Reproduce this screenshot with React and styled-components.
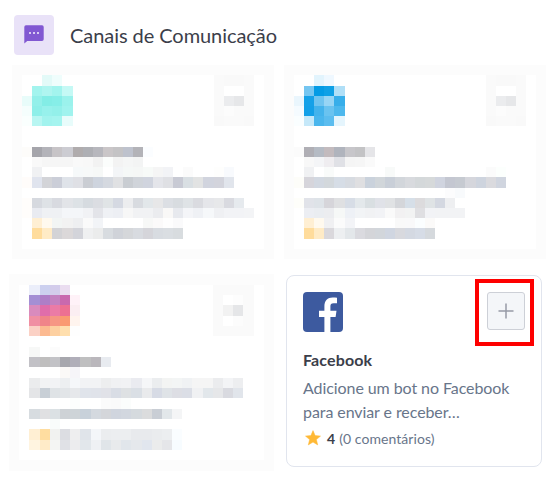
import React from "react";
import styled, { createGlobalStyle } from "styled-components";

const GlobalStyle = createGlobalStyle`
  *, *::before, *::after { box-sizing: border-box; }
  body {
    margin: 0;
    background: #fff;
    font-family: Lato, "Liberation Sans", sans-serif;
  }
`;

const Page = styled.main`
  width: 553px;
  height: 490px;
  overflow: hidden;
  background: #fff;
`;

const Header = styled.header`
  display: flex;
  align-items: center;
  gap: 16px;
  padding: 15px 14px 10px;
`;

const HeaderIcon = styled.div`
  display: grid;
  place-items: center;
  width: 40px;
  height: 40px;
  border-radius: 4px;
  background: #e9e2f8;
`;

const Title = styled.h1`
  margin: 0;
  font-size: 20px;
  font-weight: 400;
  letter-spacing: -0.06px;
  line-height: 40px;
  color: #3b3e4a;
`;

const CardRow = styled.div`
  display: flex;
  align-items: flex-start;
  gap: ${(p) => p.$gap}px;
  padding-left: ${(p) => p.$indent}px;
  margin-bottom: 15px;
`;

const MosaicCard = styled.div`
  display: grid;
  flex: none;
  grid-template-columns: ${(p) => p.$columns};
  grid-template-rows: ${(p) => p.$rows};
  background: #fcfcfc;
`;

const MosaicBody = styled.div`
  grid-area: 2 / 2 / -2 / -2;
  background: #fff;
`;

const MosaicCell = styled.span.attrs((p) => ({
  style: { gridColumn: p.$col + 1, gridRow: p.$row + 1, background: `#${p.$tone}` },
}))``;

const Card = styled.article`
  flex: none;
  width: 256px;
  height: 192px;
  margin-top: 1px;
  padding: 16px;
  border: 1px solid #e1e5ee;
  border-radius: 8px;
  background: #fff;
`;

const CardTop = styled.div`
  display: flex;
  justify-content: space-between;
  align-items: flex-start;
  height: 40px;
`;

const AddSlot = styled.div`
  position: relative;
  width: 38px;
  height: 38px;
`;

const AddButton = styled.button`
  display: grid;
  place-items: center;
  width: 38px;
  height: 38px;
  padding: 0;
  border: 1px solid #cdd0d7;
  border-radius: 3px;
  background: #f4f6f9;
`;

const Highlight = styled.div`
  position: absolute;
  top: -13px;
  left: -12px;
  width: 59px;
  height: 67px;
  border: 4px solid #fe0000;
  pointer-events: none;
`;

const CardName = styled.h2`
  margin: 16px 0 0;
  font-size: 16px;
  font-weight: 700;
  letter-spacing: 0.12px;
  line-height: 24px;
  color: #3b3e4a;
`;

const Description = styled.p`
  margin: 4px 0 0;
  font-size: 16px;
  letter-spacing: -0.08px;
  line-height: 24px;
  color: #68758a;
`;

const Rating = styled.div`
  display: flex;
  align-items: center;
  height: 24px;
  margin-top: 2px;
  padding-left: 2px;
  font-size: 14px;
  letter-spacing: 0.06px;
  color: #68758a;
`;

const Score = styled.strong`
  margin: 0 4px 0 6px;
  font-weight: 700;
  color: #3b3e4a;
`;

const PLAIN_ROWS = "10px 11px repeat(5, 10px) 11px repeat(3, 10px) 11px repeat(4, 10px) 11px 10px 10px";

/* Each strip is [row, first column, tones from left to right]. */
const ADD_BLOCK = [
  [1, 20, "fafafa f9f9f9 f9f9f9 fafafa"],
  [2, 20, "fafafa ffffff ffffff fafafa"],
  [3, 20, "fafafa ebecee e6e7e9 fafafa"],
  [4, 20, "fafafa fcfcfc fafafa fafafa"],
  [5, 20, "f9f9f9 fafafa fafafa f9f9f9"],
];

const TEAL = {
  columns: "repeat(5, 10px) 11px repeat(13, 10px) 11px repeat(6, 10px)",
  rows: PLAIN_ROWS,
  strips: [
    ...ADD_BLOCK,
    [1, 3, "e3faf8 effdfc"],
    [2, 2, "a3f4ee aff5f0 a3f4ee c5f9f5"],
    [3, 1, "e8fcfa 93f0ea 83ede6 86eee8 9bf2ec"],
    [4, 1, "f5fefd 8eefe9 97f1ec 93f0ea a0f3ee"],
    [5, 1, "fafffe b8f6f2 a2f3ee a5f4ef e8fcfb"],
    [8, 1, "fdfcfa a5a5ab b3b3b9 c7c4c7 ccccd2 b0acad aeafb4 b7b7bd cac6c8 c4c3c5 bec2cd b3b3b8 fbfdff"],
    [9, 2, "f9f9f9 f6f6f6 f6f6f6 f6f6f6 f9f9f9 f8f8f8 f2f2f2 fbfdfc f3f3f3 f5f6f6 f3f4f4"],
    [10, 2, "f0f1f3 ffffff ffffff ffffff f6f9fa f7f9f9 f6f8f7 ffffff f3f5f7 f5f8f7 f5f7f6 f7faf8 f5f5f5 f2f3f6 ffffff fbfbfb ffffff ffffff fefefd f8fafd"],
    [11, 1, "fffcfa e0e4ee d3d4d8 cbced8 dfe3e9 dfe0e5 cacdd3 ced4de d5d9e0 e0e1e3 c9cdd2 d0d4da d0d4de e4e5ea dfe0e4 c8cad4 d9dfe3 e2e3e3 d1d4de d3d4dc e1e5ec"],
    [13, 1, "fffdfb d6d9df dee2e6 d8dae0 e2e4e8 dde2e6 d6dbe0 dbdde2 e0e4e6 d5d9e2 ecedef d8dbe0 e2e7ea e7e7e8 dcdfe4 d8dce0 dfe3e6 dadbe0 e5e6ea e7e8ea d9dae0 e6eaee"],
    [14, 1, "fffdfb e9ebf1 eff1f4 eff1f4 f4f6f9 f4f6f9 f1f2f5 e3e4e9 eff1f5 edeff4 f7f7f7 f1f2f4 f1f2f4 ebecef f9f8f7 e7e9ee f4f5f8 eff1f5 f6f8fa eff0f3 f2f3f6 f2f3f6 f3f4f6"],
    [15, 2, "ffefd3 fff9ee f2f5f4 f2f2f2 eeeff1 fafafa f2f4f7 ffffff ffffff ffffff ffffff f7f8f7 fbfafa fefefe fafafb"],
    [16, 2, "ffdc9c ffebc6 d3d3d6 dbd8d9 d3d4da eff0f1 ebecec d8dce0 d0d3d9 d5d7da d8dbe0 d5d5da d8dce1 dadee2 d8dcdf"],
  ],
};

const BLUE = {
  columns: "repeat(5, 10px) 11px repeat(12, 10px) 11px repeat(7, 10px)",
  rows: PLAIN_ROWS,
  strips: [
    ...ADD_BLOCK,
    [1, 3, "e2f4fd eff8ff"],
    [2, 2, "75c6f1 039be5 0ea0e6 b0dff7"],
    [3, 1, "eaf6fd 15a1e8 6fc4f0 97d5f5 37aeea"],
    [4, 1, "f5fbff 13a0e8 43b3ec 6ac3f0 4db8ed"],
    [5, 1, "fafeff c5e8f9 4ab6ed 5cbdef e5f5fd"],
    [8, 1, "fbfbfb b0afb5 b5bbc4 c3bbbe b0b4bd c7c6ca c3c3c5 e5e5e8"],
    [9, 2, "f8f8f8 f4f5f7 efedf0 e0e1e6 f5f5f5 f6f6f6 fafafa"],
    [10, 2, "f0f1f3 ffffff f9fbfa"],
    [10, 10, "f8faf9"],
    [10, 20, "fbfbfb fcfffd"],
    [11, 1, "fdfdf9 d6d5db d2d8e1 d3d8dc d6dde6 d7dbe1 dfdfe1 cad2dc d1d6da c9cfd8 d2d6db d8dade d4d8da d6d9da d0d4df c4c7d1 c6cad1 d5d6dc ced4de dadade d0d5df"],
    [12, 16, "fcfcfd f8fafc"],
    [13, 1, "fefefa e1e3e9 dee3e8 d6d5da dfe0e2 d7dde6 e3e8eb d9dfe2 e0e2e8 e0e2e4 d4d6da d6dfe8 dcdbdd dfe3e5 d4d8e1 eeeff1"],
    [14, 2, "eceef3 eaedf1 ecedf0 f6f8f7 eef1f6 f2f4f6 f1f2f4 f2f3f6 fafafa f2f1f2 f2f3f3 dfdfe2 f2f3f6 f2f3f5 f2f3f5 f2f3f5"],
    [15, 2, "ffefd3 fff9ee f0f0f2 fbfbfb f3f4f7"],
    [15, 11, "f9f9f9 f9f9fa fbfeff fbfaf9"],
    [16, 2, "ffdc9c ffebc6 dad8dc edeff1 e3e7ea dadadf d4d5d9 d2d6db d0d6e1 d8d9de d4d9e2 d6dce6 d5d9dd"],
  ],
};

const PINK = {
  columns:
    "10px 10px 11px repeat(4, 10px) 11px repeat(4, 10px) 11px repeat(5, 10px) 11px repeat(4, 10px) 11px 10px 10px",
  rows: "11px 10px 10px 11px 10px 10px 11px 10px 10px 11px 10px 10px 11px 10px 10px 11px 10px 10px 11px",
  strips: [
    [1, 20, "fafafa fafafa fafafa fafafa"],
    [2, 20, "fafafa ffffff fdfdfd fafafa"],
    [3, 20, "fafafa f2f2f2 e5e6e8 fafafa"],
    [4, 20, "fafafa ffffff fcfcfc fafafa"],
    [5, 20, "fafafa fafafa fafafa fafafa"],
    [1, 2, "ebeefa ccd0ef d3cceb eaddf0"],
    [2, 2, "a48fd4 ae7ec7 c381c0 c969ae fff2f8"],
    [3, 2, "d98bbd e06daa eb7ba6 ed7092 fbeef2"],
    [4, 2, "f08fa3 f08489 f69684 fa9a71 fff4ee"],
    [5, 2, "fbd1c5 fcba91 fdd0a1 ffdfae fefefe"],
    [7, 2, "f7f8f7 ffffff fcfcfc"],
    [8, 2, "c2c1c6 bfbebe c2c2c6 a7a7ad b0aeb9 bfbfc0 bab7bc e8ebf0"],
    [9, 5, "fbf9f7 f6f5f9"],
    [10, 2, "ebeced f2f3f4 f2f3f5 edeff1 f5f7fa f2f3f5 f2f3f5 edeeef f0f1f3 f1f2f4 eaebf0 f5f6f8 ebedef f3f4f3 f3f5f5 f0f2f4 f5f5f5 f5f5f5 ebecee f3f4f6 edeef0"],
    [11, 2, "e4e5e7 c8cfd6 dfe3e6 e2e5e8 e6e8eb e0e4eb e0e3ea e1e2e8 d9dde5 dee1e3 dadfe5 e9eaec d7dbe5 dfe3e7 dddee4 dbdee6 f0f1f3 e2e7eb e6e7e9 d9dae0 e1e5eb"],
    [12, 6, "fcfefd ffffff ffffff fbfbfb fafafa fbfdfc"],
    [13, 2, "d7dce0 e0e0e2 dbe1e4 ced2d6 ced4d8 c8d1da d4d9df d4d6da d0d5de d2d7df d5dade dbdcdd c9ced5 e2e7ea f4f5f6"],
    [14, 4, "f9fcfb"],
    [15, 2, "ffefd3 ffdda0 f1f2f0 dcdde2 eeeeef e0e4ea f4f6f9 ebedef eceef0 eceef0 e8eaed e8eaed eaecee eceef0 fafdff"],
    [16, 2, "fff4e0 ffebc8 f4f5f3 e0e1e6 ececee e2e7eb eff1f4 e0e5e9 e8eaec e1e6eb e5e8ec e1e6ee ebecec e5e6e9 f7fcff"],
  ],
};

function Mosaic({ data }) {
  return (
    <MosaicCard $columns={data.columns} $rows={data.rows}>
      <MosaicBody />
      {data.strips.flatMap(([row, start, tones]) =>
        tones.split(" ").map((tone, i) => (
          <MosaicCell key={`${row}-${start + i}`} $row={row} $col={start + i} $tone={tone} />
        ))
      )}
    </MosaicCard>
  );
}

function ChatIcon() {
  return (
    <svg width="20" height="20" viewBox="0 0 20 20" aria-hidden="true">
      <path d="M2 0.2h16a1.7 1.7 0 0 1 1.7 1.7v12.4a1.7 1.7 0 0 1-1.7 1.7H3.2L0.3 18.4V1.9A1.7 1.7 0 0 1 2 0.2z" fill="#8158d2" />
      <path d="M5 7h2v2H5zM9 7h2v2H9zM13 7h2v2h-2z" fill="#d8cbf2" />
    </svg>
  );
}

function FacebookLogo() {
  return (
    <svg width="40" height="40" viewBox="0 0 40 40" aria-hidden="true">
      <rect width="40" height="40" rx="4" fill="#3d5a9f" />
      <path
        d="M21.4 40V25H16v-6.2h5.4v-4.7c0-5.4 3.2-8.6 8.2-8.6 1.7 0 3.3.1 4.4.3v5.4h-3.4c-2.5 0-3.2 1.2-3.2 3.1v4.5h6.1l-.9 6.2h-5.2V40z"
        fill="#fff"
      />
    </svg>
  );
}

function PlusIcon() {
  return (
    <svg width="16" height="16" viewBox="0 0 16 16" aria-hidden="true">
      <path d="M8 .5v15M.5 8h15" stroke="#969ba6" strokeWidth="1.5" fill="none" />
    </svg>
  );
}

function StarIcon() {
  return (
    <svg width="16" height="16" viewBox="0 0 16 16" aria-hidden="true">
      <path
        d="M8 .6l2.1 5 5.4.5-4.1 3.5 1.3 5.3L8 12.1l-4.7 2.8 1.3-5.3L.5 6.1l5.4-.5z"
        fill="#ffb936"
        stroke="#ffb936"
        strokeWidth=".5"
        strokeLinejoin="round"
      />
    </svg>
  );
}

export default function App() {
  return (
    <Page>
      <GlobalStyle />
      <Header>
        <HeaderIcon>
          <ChatIcon />
        </HeaderIcon>
        <Title>Canais de Comunicação</Title>
      </Header>
      <CardRow $indent={12} $gap={10}>
        <Mosaic data={TEAL} />
        <Mosaic data={BLUE} />
      </CardRow>
      <CardRow $indent={9} $gap={12}>
        <Mosaic data={PINK} />
        <Card>
          <CardTop>
            <FacebookLogo />
            <AddSlot>
              <AddButton aria-label="Adicionar">
                <PlusIcon />
              </AddButton>
              <Highlight />
            </AddSlot>
          </CardTop>
          <CardName>Facebook</CardName>
          <Description>
            Adicione um bot no Facebook
            <br />
            para enviar e receber…
          </Description>
          <Rating>
            <StarIcon />
            <Score>4</Score>
            (0 comentários)
          </Rating>
        </Card>
      </CardRow>
    </Page>
  );
}
